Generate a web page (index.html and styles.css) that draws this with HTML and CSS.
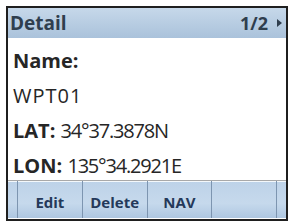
FILE: index.html
```html
<!DOCTYPE html>
<html lang="en">
<head>
    <meta charset="UTF-8">
    <title>Detail</title>
    <link rel="stylesheet" href="styles.css">
</head>
<body>
    <div class="screen">
        <div class="title-bar">
            <span class="title">Detail</span>
            <span class="page">1/2<span class="arrow"></span></span>
        </div>

        <div class="fields">
            <div class="row"><b>Name:</b></div>
            <div class="row name">WPT01</div>
            <div class="row"><b>LAT:</b> <span class="coord">34°37.3878N</span></div>
            <div class="row"><b>LON:</b> <span class="coord">135°34.2921E</span></div>
        </div>

        <div class="softkeys">
            <div class="key">Edit</div>
            <div class="key">Delete</div>
            <div class="key">NAV</div>
            <div class="key"></div>
        </div>
    </div>
</body>
</html>
```

FILE: styles.css
```css
body {
    margin: 0;
    padding: 0;
    background: white;
    font-family: 'Open Sans', sans-serif;
}
.screen {
    width: 282px;
    height: 215px;
    margin: 6px 0 0 6px;
    box-sizing: border-box;
    border: 2px solid #1f1f1f;
    display: flex;
    flex-direction: column;
}
.title-bar {
    height: 30px;
    flex: none;
    display: flex;
    align-items: center;
    justify-content: space-between;
    padding: 0 4px 0 2px;
    background: linear-gradient(to bottom, #c6d8ea, #aac2db);
    color: #2f3e4e;
    font-weight: bold;
    font-size: 19px;
}
.page {
    display: flex;
    align-items: center;
    font-size: 18px;
}
.arrow {
    width: 0;
    height: 0;
    margin-left: 9px;
    border-top: 4px solid transparent;
    border-bottom: 4px solid transparent;
    border-left: 5px solid #2f3e4e;
}
.fields {
    flex: none;
    height: 142px;
    box-sizing: border-box;
    padding: 5px 0 0 5px;
    color: #262626;
    font-size: 20px;
}
.row {
    height: 35px;
    line-height: 35px;
    white-space: nowrap;
}
.name {
    letter-spacing: 1px;
}
.coord {
    letter-spacing: -1.2px;
}
.softkeys {
    flex: none;
    height: 37px;
    display: flex;
    padding: 0 9px;
    border-top: 1px solid #a9a9a9;
    box-shadow: inset 0 1px 0 #f4f8fb;
    background: linear-gradient(to bottom, #bdd2e8, #c6d9ec 60%, #aec7e1);
}
.key {
    width: 64px;
    display: flex;
    align-items: center;
    justify-content: center;
    border-left: 1px solid #7d95b0;
    color: #24395a;
    font-weight: bold;
    font-size: 15px;
    padding-top: 5px;
}
.key:last-child {
    border-right: 1px solid #7d95b0;
}
```
